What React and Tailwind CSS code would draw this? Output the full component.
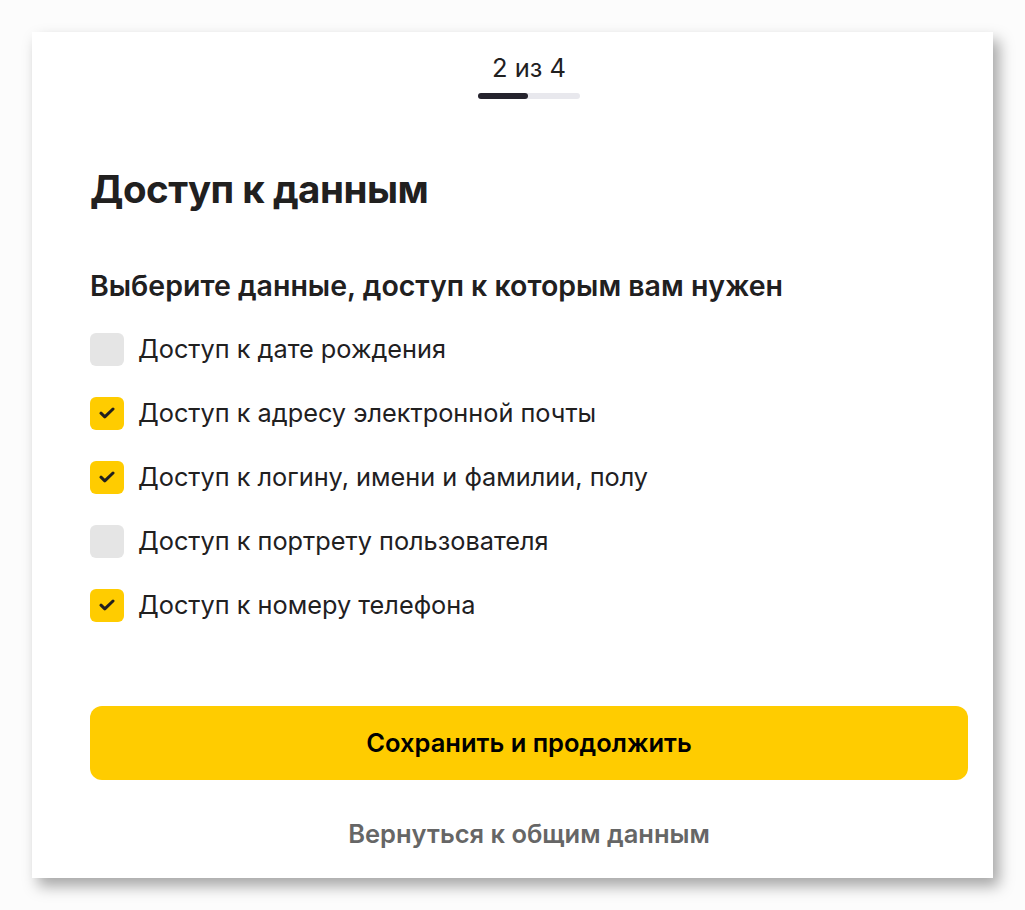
import React from "react";

const items = [
  { label: "Доступ к дате рождения", checked: false },
  { label: "Доступ к адресу электронной почты", checked: true },
  { label: "Доступ к логину, имени и фамилии, полу", checked: true },
  { label: "Доступ к портрету пользователя", checked: false },
  { label: "Доступ к номеру телефона", checked: true },
];

const Checkbox = ({ checked }) => (
  <span
    className={
      "flex h-[33px] w-[34px] shrink-0 items-center justify-center rounded-[6px] " +
      (checked ? "bg-[#ffcc00]" : "bg-[#e5e5e5]")
    }
  >
    {checked && (
      <svg width="16" height="12" viewBox="0 0 16 12" fill="none">
        <path d="M2 6.2l3.8 3.6L14 2" stroke="#21201f" strokeWidth="3" strokeLinecap="round" strokeLinejoin="round" />
      </svg>
    )}
  </span>
);

const App = () => {
  return (
    <div className="min-h-[910px] bg-[#fcfcfc] pl-[32px] pt-[32px] font-['Inter',sans-serif] text-[#21201f]">
      <div className="flex h-[846px] w-[961px] flex-col bg-white pl-[58px] pr-[25px] shadow-[6px_8px_14px_rgba(0,0,0,0.35)]">
        <div className="mt-[20px] flex flex-col items-center">
          <p className="text-[25.5px] leading-[32px]">2 из 4</p>
          <div className="mt-[9px] flex h-[6px] w-[102px] rounded-full bg-[#e8e8ed]">
            <div className="h-[6px] w-[50px] rounded-full bg-[#25232d]" />
          </div>
        </div>

        <h1 className="mt-[66px] text-[38.5px] font-bold leading-[48px] tracking-[-0.5px]">Доступ к данным</h1>

        <h2 className="mt-[56px] text-[28.5px] font-semibold leading-[34px]">
          Выберите данные, доступ к которым вам нужен
        </h2>

        <ul className="mt-[29px] flex flex-col gap-[30px]">
          {items.map((item) => (
            <li key={item.label} className="flex items-center gap-[14px]">
              <Checkbox checked={item.checked} />
              <span className="text-[25.3px] leading-[34px]">{item.label}</span>
            </li>
          ))}
        </ul>

        <button className="mt-[84px] flex h-[74px] w-full items-center justify-center rounded-[12px] bg-[#ffcc00] text-[25.5px] font-semibold text-black">
          Сохранить и продолжить
        </button>

        <p className="mt-[38px] text-center text-[25.5px] font-semibold leading-[32px] text-[#666]">
          Вернуться к общим данным
        </p>
      </div>
    </div>
  );
};

export default App;
